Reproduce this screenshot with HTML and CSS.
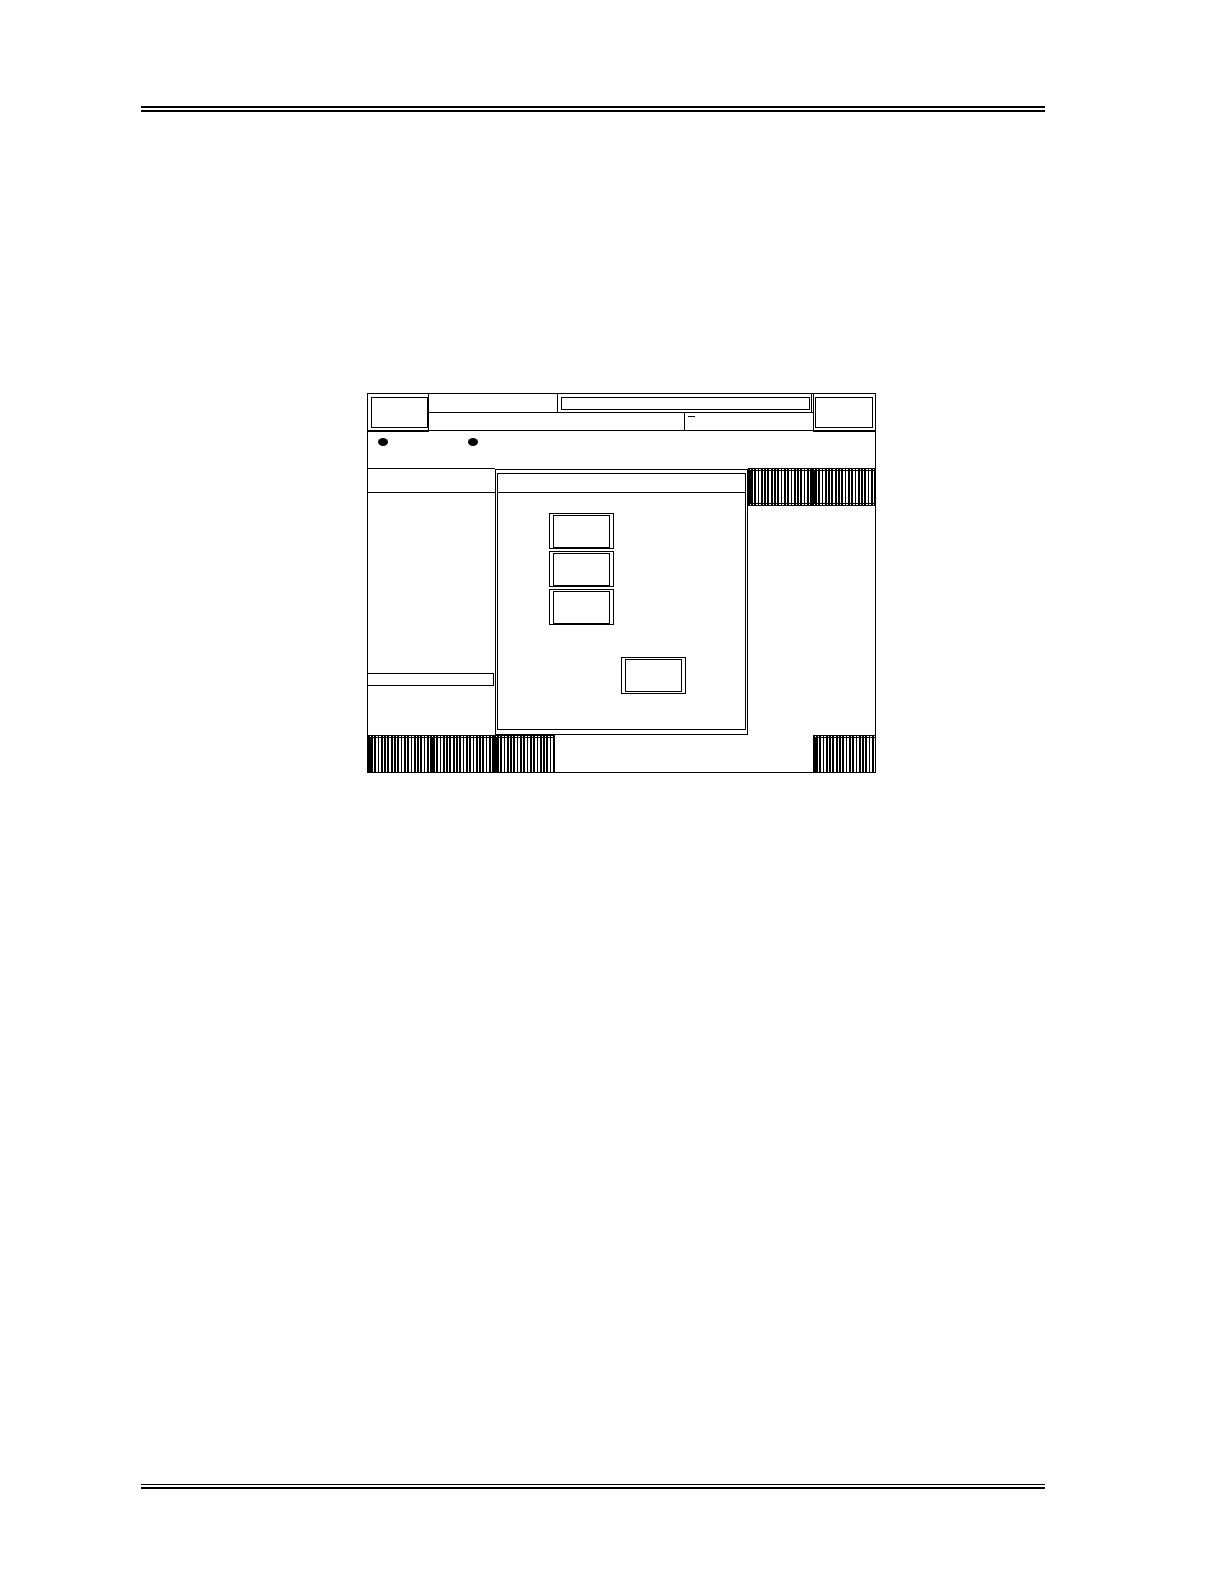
FILE: index.html
```html
<!DOCTYPE html>
<html>
<head>
<meta charset="utf-8">
<link rel="stylesheet" href="styles.css">
</head>
<body>
<div class="page">
  <div class="rule-top"></div>
  <div class="frame">
    <div class="hdr">
      <div class="hl"><div class="bevel"></div></div>
      <div class="hm">
        <div class="ra">
          <div class="ra-blank"></div>
          <div class="ra-box"><div class="ra-inner"></div></div>
        </div>
        <div class="rb">
          <div class="rb-a"></div>
          <div class="rb-b"><span class="dash"></span></div>
        </div>
      </div>
      <div class="hr"><div class="bevel-r"></div></div>
    </div>
    <div class="band">
      <span class="dot"></span>
      <span class="dot"></span>
    </div>
    <div class="main">
      <div class="lp">
        <div class="lp-head"></div>
        <div class="lp-field"></div>
      </div>
      <div class="dlg">
        <div class="dlg-in">
          <div class="dlg-title"></div>
          <div class="dlg-body">
            <div class="btns">
              <div class="btn"><div class="btn-i"></div></div>
              <div class="btn"><div class="btn-i"></div></div>
              <div class="btn"><div class="btn-i"></div></div>
            </div>
            <div class="btn ok"><div class="btn-i"></div></div>
          </div>
        </div>
      </div>
      <div class="rc">
        <div class="rc-row">
          <div class="hatch tb w64"></div>
          <div class="hatch tb w63"></div>
        </div>
      </div>
    </div>
    <div class="foot">
      <div class="hatch w62"></div>
      <div class="hatch w64"></div>
      <div class="hatch w61"></div>
      <div class="spacer"></div>
      <div class="hatch w62"></div>
    </div>
  </div>
  <div class="rule-bottom"></div>
</div>
</body>
</html>
```
FILE: styles.css
```css
html, body {
  margin: 0;
  padding: 0;
  background: #fff;
}

.page {
  width: 1224px;
  height: 1584px;
  padding-top: 106px;
  box-sizing: border-box;
  font-family: "Liberation Sans", Arial, sans-serif;
  overflow: hidden;
}

.rule-top {
  margin-left: 141px;
  width: 904px;
  height: 2px;
  border-top: 2px solid #000;
  border-bottom: 2px solid #000;
}

.rule-bottom {
  margin: 711px 0 0 141px;
  width: 904px;
  height: 2px;
  border-top: 1px solid #000;
  border-bottom: 2px solid #000;
}

.frame {
  margin: 281px 0 0 367px;
  width: 509px;
  height: 380px;
  border: 1px solid #000;
  box-sizing: border-box;
  display: flex;
  flex-direction: column;
}

/* header */
.hdr {
  height: 38px;
  display: flex;
  flex: none;
}

.hl {
  width: 61px;
  height: 38px;
  box-sizing: border-box;
  border-right: 1px solid #000;
  border-bottom: 2px solid #000;
}

.bevel {
  margin: 3px 0 0 3px;
  width: 57px;
  height: 31px;
  box-sizing: border-box;
  border: 1px solid #000;
}

.hm {
  width: 384px;
  display: flex;
  flex-direction: column;
}

.ra {
  height: 19px;
  box-sizing: border-box;
  border-bottom: 1px solid #000;
  display: flex;
}

.ra-blank {
  width: 128px;
}

.ra-box {
  width: 255px;
  box-sizing: border-box;
  border-left: 1px solid #000;
  border-right: 1px solid #000;
  padding: 3px 1px 2px 3px;
}

.ra-inner {
  height: 100%;
  box-sizing: border-box;
  border: 1px solid #000;
}

.rb {
  height: 18px;
  box-sizing: border-box;
  border-bottom: 1px solid #000;
  display: flex;
}

.rb-a {
  width: 256px;
  box-sizing: border-box;
  border-right: 1px solid #000;
}

.rb-b {
  padding: 3px 0 0 3px;
}

.dash {
  display: block;
  width: 7px;
  height: 0;
  border-top: 1px solid #000;
}

.hr {
  width: 62px;
  height: 38px;
  box-sizing: border-box;
  border-left: 1px solid #000;
  border-bottom: 2px solid #000;
}

.bevel-r {
  margin: 3px 2px 0 1px;
  height: 31px;
  box-sizing: border-box;
  border: 1px solid #000;
}

/* band with indicator dots */
.band {
  height: 36px;
  flex: none;
  box-sizing: border-box;
  display: flex;
  align-items: flex-start;
  padding: 6px 0 0 10px;
  gap: 80px;
}

.dot {
  width: 10px;
  height: 8px;
  border-radius: 50%;
  background: #000;
}

/* main */
.main {
  height: 267px;
  flex: none;
  display: flex;
}

.lp {
  width: 127px;
  box-sizing: border-box;
  border-top: 1px solid #000;
  display: flex;
  flex-direction: column;
}

.lp-head {
  height: 24px;
  box-sizing: border-box;
  border-bottom: 1px solid #000;
}

.lp-field {
  margin: 180px 0 0 -1px;
  width: 127px;
  height: 13px;
  box-sizing: border-box;
  border: 1px solid #000;
}

.dlg {
  width: 253px;
  height: 266px;
  margin-top: 1px;
  box-sizing: border-box;
  border: 1px solid #000;
  padding: 3px 1px 4px 1px;
}

.dlg-in {
  height: 100%;
  box-sizing: border-box;
  border: 1px solid #000;
}

.dlg-title {
  height: 19px;
  box-sizing: border-box;
  border-bottom: 1px solid #000;
}

.dlg-body {
  padding: 20px 0 0 51px;
}

.btns {
  display: flex;
  flex-direction: column;
  gap: 2px;
  width: 65px;
}

.btn {
  width: 65px;
  height: 36px;
  box-sizing: border-box;
  border: 1px solid #000;
  padding: 1px 3px 0 3px;
}

.btn-i {
  height: 100%;
  box-sizing: border-box;
  border: 1px solid #000;
}

.btn.ok {
  margin: 32px 0 0 72px;
  height: 37px;
  padding: 1px 3px;
}

.rc {
  width: 127px;
}

.rc-row {
  display: flex;
  height: 38px;
}

/* footer */
.foot {
  height: 37px;
  flex: none;
  display: flex;
}

.spacer {
  flex: 1;
}

/* hatched buttons */
.hatch {
  box-sizing: border-box;
  border-left: 3px solid #000;
  border-top: 3px double #000;
  background: repeating-linear-gradient(90deg, #000 0 1.7px, #fff 1.7px 3.3px);
}

.hatch.tb {
  border-bottom: 3px double #000;
}

.w64 { width: 64px; }
.w63 { width: 63px; }
.w62 { width: 62px; }
.w61 { width: 61px; }
```
